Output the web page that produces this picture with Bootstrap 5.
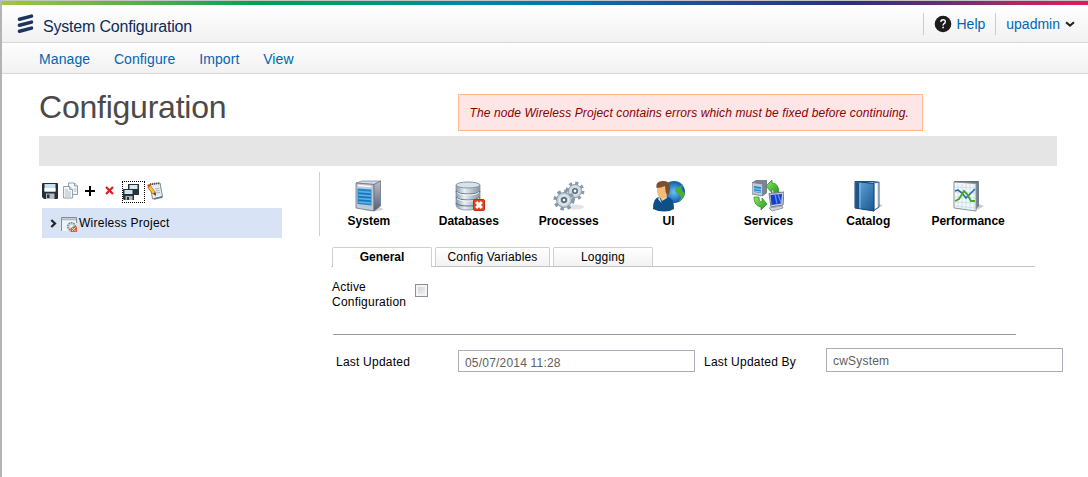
<!DOCTYPE html>
<html lang="en">
<head>
<meta charset="utf-8">
<meta name="viewport" content="width=device-width, initial-scale=1">
<title>System Configuration</title>
<link href="https://cdn.jsdelivr.net/npm/bootstrap@5.3.0/dist/css/bootstrap.min.css" rel="stylesheet">
<style>
body{font:12px/15px "Liberation Sans",Arial,sans-serif;color:#000;background:#fff;min-height:477px;height:100vh;overflow:hidden;border-left:2px solid #b4b4b4;border-top:1px solid #c4c4c4}
a{text-decoration:none;color:#0066b3}
svg{display:block;flex:none}
.rainbow{height:4px;background:linear-gradient(90deg,#a2c73b 0,#4aae47 14%,#00a050 24%,#009a6c 32%,#0088a6 42%,#0072b8 53%,#1c4f9c 64%,#2b3080 78%,#6b2c74 87%,#a82866 93%,#e01b58 100%)}
.bar-top{height:38px;background:linear-gradient(#fff,#f1f1f1);border-bottom:1px solid #d8d8d8;padding:0 13px 0 15px}
.bar-nav{height:31px;background:linear-gradient(#fdfdfd,#f2f2f2);border-bottom:1px solid #d8d8d8;padding:2px 0 0 37px;gap:23.700px;font-size:14px;letter-spacing:.1px}
.brand{font-size:16px;color:#0b2b5c;letter-spacing:-.2px;line-height:20px}
.account{font-size:14px}
.account a{padding-top:2px}
.vline{width:1px;height:22px;background:#ccc}
.title-row{height:62px;padding-left:37px}
h1{font-size:32px;line-height:36px;color:#4a4a4a;margin:15px 0 0;width:420px;letter-spacing:-.23px}
.notice{width:465px;height:37px;margin:20px 0 0 -1px;background:#ffe6e6;border:1px solid #ffba94;color:#8b0000;font-style:italic;padding:11px 0 0 10.500px;letter-spacing:.11px;white-space:nowrap}
.band{height:30px;margin-left:37px;width:1018px;background:#e5e5e5}
.side{width:277px;padding:12px 0 0 40px}
.tools{height:30px;padding-top:4px}
.dotted{width:23px;height:22px;border:1px dotted #000;margin:-1px 2px 0 8px}
.tree{width:240px;height:30px;background:#d9e3f6;padding-left:8px;letter-spacing:.25px}
.modules{height:64px;border-left:1px solid #d0d0d0;margin:6px 0 0 40px;width:700px}
.module{width:100px;padding:8px 2px 0 0;font-weight:bold;color:#000;display:flex;flex-direction:column;align-items:center}
.module svg{margin-bottom:2px}
.tabs{margin:11px 0 0 52px;width:704px;height:20px;border-bottom:1px solid #c3c3c3;padding-left:1px;gap:3px}
.tabs a{height:19px;border:1px solid #cfcfcf;border-bottom:0;border-radius:2px 2px 0 0;background:linear-gradient(#fff,#f2f2f2);color:#000;text-align:center;line-height:18px;letter-spacing:.18px}
.tabs a.active{height:20px;background:#fff;font-weight:bold;letter-spacing:0}
.check{width:13px;height:13px;border:1px solid #8e8f8f;background:linear-gradient(135deg,#c9cdd5,#f7f7f7);box-shadow:inset 0 0 0 2px #f4f4f4}
.active-row{margin:13px 0 0 53px;height:54px}
.active-row label{letter-spacing:.22px}
.rule{width:683px;height:1px;background:#9a9a9a;margin-left:54px}
.fields{margin:13px 0 0 57px;height:24px}
.fields span{letter-spacing:.22px}
.field{width:237px;border:1px solid #a9adb5;color:#606060;padding-left:6px;letter-spacing:.2px}
</style>
</head>
<body>
<div class="rainbow"></div>
<header class="bar-top d-flex align-items-center">
  <svg width="18" height="20" viewBox="0 0 18 20" style="margin-top:1px"><g stroke="#1d3360" stroke-width="3.500" stroke-linecap="round"><path d="M2.500 5.300 14.500 2.100M2.500 11.300 14.500 8.100M2.500 17.300 14.500 14.100"/></g></svg>
  <span class="brand" style="margin:6px 0 0 8px">System Configuration</span>
  <div class="account d-flex align-items-center ms-auto">
    <i class="vline"></i>
    <svg width="18" height="18" viewBox="0 0 18 18" style="margin:1px 5px 0 10px"><circle cx="9" cy="9" r="8.300" fill="#1c1c1c"/><path d="M6.800 7q0-2.300 2.300-2.300T11.300 7q0 1-1.200 1.700Q9.100 9.300 9.100 10.600" fill="none" stroke="#fff" stroke-width="1.400"/><path d="M8.300 11.800h1.600v1.500H8.300z" fill="#fff"/></svg>
    <a href="#">Help</a>
    <i class="vline" style="margin:0 10px"></i>
    <a href="#">upadmin</a>
    <svg width="10" height="7" viewBox="0 0 10 7" style="margin:2px 0 0 5px"><path d="M1 1.200 5 4.600 9 1.200" fill="none" stroke="#222" stroke-width="2"/></svg>
  </div>
</header>
<nav class="bar-nav d-flex align-items-center">
  <a href="#">Manage</a><a href="#">Configure</a><a href="#">Import</a><a href="#">View</a>
</nav>
<div class="title-row d-flex">
  <h1 class="fw-normal">Configuration</h1>
  <div class="notice">The node Wireless Project contains errors which must be fixed before continuing.</div>
</div>
<div class="band"></div>
<div class="d-flex">
  <aside class="side flex-shrink-0">
    <div class="tools d-flex align-items-start">
      <svg width="16" height="16" viewBox="0 0 16 16" style="margin-top:1px"><path d="M0 1q0-1 1-1h14q1 0 1 1v14q0 1-1 1H2l-2-2z" fill="#23303c"/><path d="M2.500 1h11v7.500h-11z" fill="#c4e2f4"/><path d="M2.500 5h11v3.500h-11z" fill="#fff"/><path d="M4 10.500h8.500V16H4z" fill="#b8bcc0"/><path d="M5 11.500h2.500V15H5z" fill="#333"/></svg>
      <svg width="16" height="17" viewBox="0 0 16 17" style="margin-left:5px"><g fill="#f8fafb" stroke="#8494a0" stroke-width=".9"><path d="M5.500 1h6l3 3v8.500h-9z"/><path d="M11.500 1v3h3" fill="#dce2e6"/><path d="M.6 4.500h6l3 3V16h-9z"/><path d="M6.600 4.500v3h3" fill="#dce2e6"/></g><path d="M2 8h3M2 10h6M2 12h6M2 14h6M11 7h2.500M11 9h2.500" stroke="#a5b1ba" stroke-width=".9"/></svg>
      <svg width="10" height="10" viewBox="0 0 10 10" style="margin:4px 0 0 6px"><path d="M5 0v10M0 5h10" stroke="#000" stroke-width="2"/></svg>
      <svg width="9" height="9" viewBox="0 0 9 9" style="margin:4px 0 0 10px"><path d="M1 1 8 8M8 1 1 8" stroke="#dc1e1e" stroke-width="2.200"/></svg>
      <div class="dotted"><svg width="17" height="18" viewBox="0 0 17 18" style="margin-top:1px"><path d="M5 1h11v11H5z" fill="#28323a"/><path d="M6.500 2h8v4h-8z" fill="#d9e9f1"/><path d="M0 6h11v11H1l-1-1z" fill="#28323a"/><path d="M1.500 7h8v4h-8z" fill="#d3e4ed"/><path d="M2.500 13h7v4h-7z" fill="#b2b5b8"/><path d="M4 14h2v3H4z" fill="#333"/></svg></div>
      <svg width="17" height="18" viewBox="0 0 17 18"><path d="M3 2.500 13 1l2.500 13.500L5.500 17z" fill="#e5edf2" stroke="#7e8c95"/><path d="M7 17l8.500-2" stroke="#62717b" stroke-width="1.500"/><path d="M3 2.200l10-1" stroke="#555" stroke-dasharray="1 1" stroke-width="2"/><path d="M8 7l4-.6M8.500 9l4-.6M9 11l4-.6" stroke="#a6b6c0"/><path d="M1.800 4.200 7 11" stroke="#a86510" stroke-width="3.600"/><path d="M2.200 4.500 7 11" stroke="#ffc52f" stroke-width="2.400"/><path d="M0 3l2.500-1L4 3.600 1.500 5.500z" fill="#d44c2c"/><path d="M6 11.800 8.500 10l.5 4z" fill="#4b3420"/></svg>
    </div>
    <div class="tree d-flex align-items-center">
      <svg width="7" height="9" viewBox="0 0 7 9"><path d="M1.300 1 5 4.500 1.300 8" fill="none" stroke="#222" stroke-width="2.200"/></svg>
      <svg width="16" height="15" viewBox="0 0 16 15" style="margin:3px 2px 0 4px"><path d="M.5.500h15V14H.5z" fill="#eef2f5"/><path d="M.5 14V.5h15V6" fill="none" stroke="#7e8d9a"/><path d="M1 1.300h14v2H1z" fill="#b3bcc4"/><circle cx="10.500" cy="9.500" r="3.800" fill="#ccd5dc" stroke="#788793" stroke-width="1.500" stroke-dasharray="1.600 .8"/><circle cx="10.500" cy="9.500" r="1.300" fill="#fff"/><path d="M9.500 15v-3.500L12 9.500h4V15z" fill="#e4573a"/><path d="m11 11 3.500 3m0-3.500L11 14" stroke="#ffd5c8" stroke-width="1"/></svg>
      <span style="margin-top:1px">Wireless Project</span>
    </div>
  </aside>
  <main class="flex-shrink-0">
    <div class="modules d-flex">
      <a class="module" href="#"><svg width="32" height="32" viewBox="0 0 32 32"><defs>
        <linearGradient id="blue" x2="1" y2="1"><stop stop-color="#69aede"/><stop offset="1" stop-color="#155690"/></linearGradient>
        <linearGradient id="steel"><stop stop-color="#8b9aa9"/><stop offset=".35" stop-color="#e9f0f5"/><stop offset="1" stop-color="#8395a5"/></linearGradient>
        <linearGradient id="dark" y2="1" x2="0"><stop stop-color="#b9bfcb"/><stop offset="1" stop-color="#555d70"/></linearGradient>
        <radialGradient id="globe"><stop stop-color="#65c5f6"/><stop offset="1" stop-color="#1258aa"/></radialGradient>
        <linearGradient id="green" x2="1" y2="1"><stop stop-color="#8fea68"/><stop offset="1" stop-color="#22941a"/></linearGradient></defs>
        <ellipse cx="20" cy="29" rx="10" ry="2" fill="#d4d4d4"/><path d="M3 3 9 1h18.500L21 4.500z" fill="#d6d9e1" stroke="#777f90" stroke-width=".7"/><path d="M3 3 21 4.500V31L3 28z" fill="#c2c9d6" stroke="#6b7588" stroke-width=".8"/><path d="M21 4.500 27.500 1v25L21 31z" fill="url(#dark)" stroke="#626a7b" stroke-width=".7"/><path d="M4.500 8.500 18.500 9.500v16L4.500 24z" fill="#2288ce"/><path d="M5.500 11.500 18 12.500M5.500 15l12.500 1M5.500 18.500l12.500 1M5.500 22l12.500 1" stroke="#5db2e5" stroke-width="1.300"/><path d="M5.500 13.200 18 14.200M5.500 16.700l12.500 1M5.500 20.200l12.500 1" stroke="#1769ab" stroke-width=".8"/><path d="M5 5.500 18 6.700" stroke="#fff" stroke-width="1.300"/></svg>System</a>
      <a class="module" href="#"><svg width="32" height="32" viewBox="0 0 32 32"><path d="M3 5v20q0 5 12 5t12-5V5z" fill="url(#steel)" stroke="#8392a0" stroke-width=".8"/><ellipse cx="15" cy="5" rx="12" ry="3" fill="#d9e3eb" stroke="#8797a5"/><g fill="none" stroke="#637789" stroke-width="1.200"><path d="M3 11q2 3 12 3t12-3M3 17q2 3 12 3t12-3M3 23q2 3 12 3t12-3"/></g><path d="M4 12.500q3 2.500 11 2.500t11-2.500M4 18.500Q7 21 15 21t11-2.500" fill="none" stroke="#f5f9fc"/><rect x="20.500" y="19.500" width="11" height="11" rx="1.500" fill="#e8421c" stroke="#bf2b12"/><path d="m23.200 22 5.600 6m0-6-5.600 6" stroke="#fff" stroke-width="3"/></svg>Databases</a>
      <a class="module" href="#"><svg width="32" height="32" viewBox="0 0 32 32"><ellipse cx="22" cy="27" rx="9" ry="2.500" fill="#e4e4e4"/><circle cx="22" cy="11" r="7.800" fill="none" stroke="#8b9aa8" stroke-width="3.200" stroke-dasharray="3.060 3.060"/><circle cx="22" cy="11" r="6.500" fill="#d2dce4" stroke="#8b9aa8" stroke-width="1"/><circle cx="22" cy="11" r="2.200" fill="#fff" stroke="#5b6977" stroke-width="1.600"/><circle cx="11" cy="20" r="8.800" fill="none" stroke="#8799a9" stroke-width="3.500" stroke-dasharray="3.450 3.450"/><circle cx="11" cy="20" r="7.400" fill="#c6d3dd" stroke="#8395a6" stroke-width="1"/><circle cx="11" cy="20" r="4.700" fill="none" stroke="#edf3f7"/><circle cx="11" cy="20" r="2.200" fill="#fff" stroke="#566573" stroke-width="1.700"/></svg>Processes</a>
      <a class="module" href="#"><svg width="32" height="32" viewBox="0 0 32 32"><circle cx="21" cy="12" r="11" fill="url(#globe)"/><path d="M21 1q5 0 8 4l-3 2-3 1-1 4 4 2 2 4-3 4q6-3 7-9l-2-1-2-4 2-3-4-3q-3-1-5-1z" fill="#4dad36"/><path d="M0 29q0-12 7-12h7q7 0 7 12-4 2.500-10 2.500T0 29z" fill="#0e4f88"/><path d="m7 16 2 5 5-3-1-3H8z" fill="#f5d2a2"/><path d="M6.500 17 5 19l3.500 4z" fill="#e8edf3"/><ellipse cx="9.500" cy="10.500" rx="5.500" ry="8" fill="#f4bc77"/><path d="M3.500 8Q2 2 9 1q8-1 8 6 0 6-2.500 9-2.500-4-2.500-10-4 2-8.500 2z" fill="#7b502e"/></svg>UI</a>
      <a class="module" href="#"><svg width="32" height="32" viewBox="0 0 32 32"><path d="M0 2.500 4 0h11v13l-4 3L0 14z" fill="#7c8492"/><path d="M0 2.500 10.500 4v12L0 14z" fill="#c1c9d3" stroke="#6f7986" stroke-width=".7"/><path d="M2 6l7 1v6l-7-1z" fill="#2889cc"/><path d="M2 8.500l7 1M2 11l7 1" stroke="#8bd0f3"/><path d="M14 6 20 0v3q7 0 7 11h-5q0-5-2-5v4z" fill="url(#green)" stroke="#238a20" stroke-width=".7"/><path d="M2 17h5q0 5 3 5v-4l5 6-6 6v-3q-7-1-7-10z" fill="url(#green)" stroke="#238a20" stroke-width=".7"/><path d="M17 13.500 32 12l-1 13-12 2z" fill="#c6cbd3" stroke="#70798a"/><path d="m18.500 15 11.500-1-1 9.500-9.500 1.500z" fill="#153fc8"/><path d="m23 14.500 2 9m1-9 3 8" stroke="#5b91ff" stroke-width="1.300"/><path d="m17 28 13-2 1 2-11 3z" fill="#d1d5db" stroke="#858c98" stroke-width=".8"/></svg>Services</a>
      <a class="module" href="#"><svg width="32" height="32" viewBox="0 0 32 32"><path d="m24 30 7-5-4-1z" fill="#ccc"/><path d="M3 1 9 3l18-1-5-1z" fill="#245684"/><path d="m21 3 6-1v25l-6 4z" fill="#dce4ea" stroke="#325d83"/><path d="M3 1.500 22 3.500V31L3 28z" fill="url(#blue)" stroke="#14406d"/><path d="M3.500 2 7 2.500V28.500L3.500 28z" fill="#1b568b"/><path d="M8 3v25.500" stroke="#85c1e9"/><path d="M24 4v24" stroke="#f9fafb" stroke-width="2"/></svg>Catalog</a>
      <a class="module" href="#"><svg width="32" height="32" viewBox="0 0 32 32"><path d="m25 30 7-4-5-2z" fill="#ccc"/><path d="m23 3 4-2v25l-4 5z" fill="#74808c"/><path d="M2 1h25l-3 3H2z" fill="#657382"/><path d="m2 2 22 1.500V31L2 28z" fill="#f4f8fa" stroke="#87939d"/><path d="M6 4v24M10 4v25M14 4v25M18 4v26M22 4v26M3 7l20 1M3 12l20 1M3 17l20 1M3 22l20 1M3 26l20 2" stroke="#c5dae6" stroke-width=".8"/><path d="m3 11 3-1 4 3 4 5 3-3 6-6" fill="none" stroke="#286db6" stroke-width="1.700"/><path d="m3 21 4-2 5-8 3 3 4 7 4 0" fill="none" stroke="#46a829" stroke-width="1.900"/></svg>Performance</a>
    </div>
    <div class="tabs d-flex">
      <a class="active" href="#" style="width:100px">General</a>
      <a href="#" style="width:115px">Config Variables</a>
      <a href="#" style="width:100px">Logging</a>
    </div>
    <div class="active-row d-flex">
      <label style="width:83px">Active<br>Configuration</label>
      <span class="check" style="margin-top:4px"></span>
    </div>
    <div class="rule"></div>
    <div class="fields d-flex align-items-start">
      <span style="width:122px;margin-top:7px">Last Updated</span>
      <div class="field" style="height:22px;margin-top:2px;padding-top:5px">05/07/2014 11:28</div>
      <span style="width:122px;margin:7px 0 0 9px">Last Updated By</span>
      <div class="field" style="height:24px;padding-top:5px">cwSystem</div>
    </div>
  </main>
</div>
<script src="https://cdn.jsdelivr.net/npm/bootstrap@5.3.0/dist/js/bootstrap.bundle.min.js"></script>
</body>
</html>
